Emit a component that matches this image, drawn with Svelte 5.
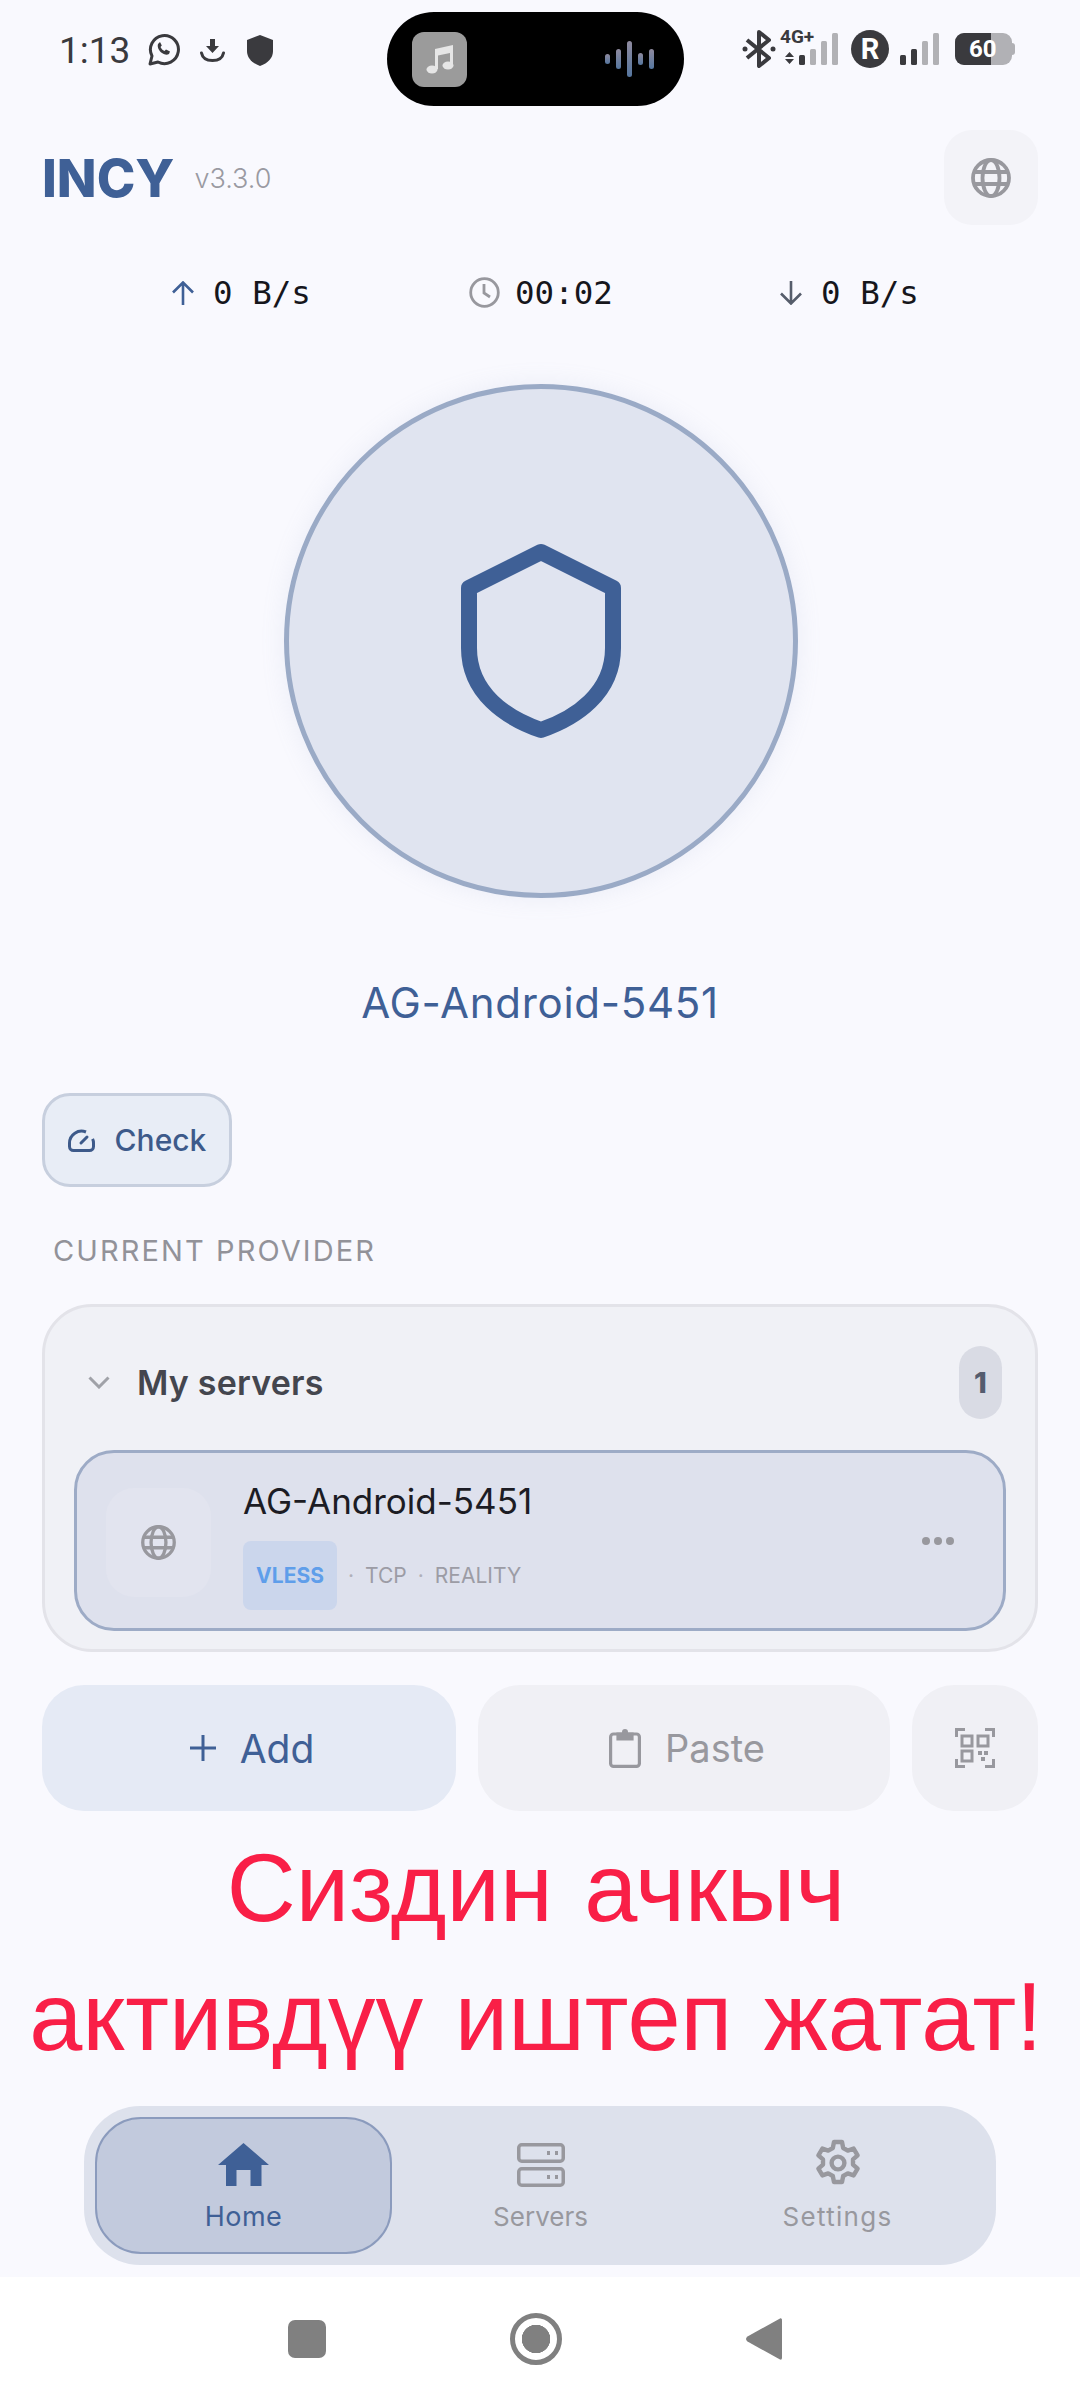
<script>
  const stats = [
    { id: 'up', value: '0 B/s' },
    { id: 'time', value: '00:02' },
    { id: 'down', value: '0 B/s' }
  ];
  const bars = [10, 16, 24, 32];
  const wave = [10, 20, 36, 12, 20];
</script>

{#snippet globe(size)}
  <svg class="globe" width={size} height={size} viewBox="0 0 40 40" fill="none" stroke="currentColor" stroke-width="3.800">
    <circle cx="20" cy="20" r="18" />
    <ellipse cx="20" cy="20" rx="8.500" ry="18" />
    <path d="M3 14h34M3 26h34" />
  </svg>
{/snippet}

{#snippet signal(first)}
  <div class="bars">
    {#each bars as h, i}
      <span class="bar" class:on={i < first} style="height:{h}px"></span>
    {/each}
  </div>
{/snippet}

<div class="page">
  <div class="status">
    <div class="status-left">
      <span class="clock">1:13</span>
      <svg width="33" height="32" viewBox="0 0 33 32" fill="none" stroke="#3a3a3e" stroke-width="3">
        <path d="M3 30l2-8a14 14 0 1 1 6 6z" stroke-linejoin="round" />
        <path d="M11 10c-1 3 1 7 4 9s5 2 7 1l1-2.500-4-2-1.500 1.500c-2-1-3-2-4-4l1.300-1.500-1.800-3.500z" fill="#3a3a3e" stroke="none" />
      </svg>
      <svg class="dl" width="25" height="24" viewBox="0 0 25 24" fill="#3a3a3e">
        <path d="M10 1h5v7h4l-6.500 7L6 8h4z" />
        <path d="M1.500 15c1 5 5 7.500 11 7.500s10-2.500 11-7.500" fill="none" stroke="#3a3a3e" stroke-width="3" stroke-linecap="round" />
      </svg>
      <svg class="sh" width="26" height="31" viewBox="0 0 26 31" fill="#3a3a3e">
        <path d="M13 0l13 5v11c0 7-5 12-13 15C5 28 0 23 0 16V5z" />
      </svg>
    </div>
    <div class="island">
      <div class="music">
        <svg width="28" height="30" viewBox="0 0 28 30" fill="#e6e6e6">
          <path d="M9 5l18-4v20h-3V9L12 11.500V25H9z" />
          <ellipse cx="6" cy="25.500" rx="5.500" ry="4" />
          <ellipse cx="22" cy="21.500" rx="5.500" ry="4" />
        </svg>
      </div>
      <div class="wave">
        {#each wave as h}
          <span style="height:{h}px"></span>
        {/each}
      </div>
    </div>
    <div class="status-right">
      <svg class="bt" width="34" height="38" viewBox="0 0 34 38" fill="none" stroke="#3a3a3e" stroke-width="4">
        <path d="M5 10l22 18-10 8V2l10 8L5 28" stroke-linejoin="round" />
        <circle cx="3" cy="19" r="2.500" fill="#3a3a3e" stroke="none" />
        <circle cx="31" cy="19" r="2.500" fill="#3a3a3e" stroke="none" />
      </svg>
      <div class="net">
        <span class="g4">4G+</span>
        <div class="net-row">
          <svg width="9" height="12" viewBox="0 0 9 12" fill="#3a3a3e"><path d="M4.500 0L9 5H0zM0 7h9l-4.500 5z" /></svg>
          {@render signal(1)}
        </div>
      </div>
      <span class="roam">R</span>
      {@render signal(2)}
      <div class="battery"><span class="fill"></span><span class="pct">60</span></div>
    </div>
  </div>

  <header>
    <div class="brand">
      <span class="logo">INCY</span>
      <span class="version">v3.3.0</span>
    </div>
    <button class="lang">{@render globe(40)}</button>
  </header>

  <div class="stats">
    {#each stats as s}
      <div class="stat {s.id}">
        {#if s.id === 'up'}
          <svg width="24" height="24" viewBox="0 0 24 24" fill="none" stroke="#3f6096" stroke-width="2.600"><path d="M12 24V2M2 11.500L12 1.500l10 10" /></svg>
        {:else if s.id === 'time'}
          <svg width="31" height="31" viewBox="0 0 31 31" fill="none" stroke="#98989e" stroke-width="2.800"><circle cx="15.500" cy="15.500" r="13.800" /><path d="M15 7v9l6 4" /></svg>
        {:else}
          <svg width="24" height="24" viewBox="0 0 24 24" fill="none" stroke="#565d6b" stroke-width="2.600"><path d="M12 0v22M2 12.500l10 10 10-10" /></svg>
        {/if}
        <span>{s.value}</span>
      </div>
    {/each}
  </div>

  <div class="power">
    <button class="orb">
      <svg width="160" height="196" viewBox="0 0 160 196" fill="none" stroke="#3f6096" stroke-width="16" stroke-linejoin="round">
        <path d="M80 9l72 36v60c0 45-37 70-72 82C45 175 8 150 8 105V45z" />
      </svg>
    </button>
    <div class="active-name">AG-Android-5451</div>
  </div>

  <section class="content">
    <button class="check">
      <svg width="27" height="23" viewBox="0 0 27 23" fill="none" stroke="#3d5a8a" stroke-width="3">
        <path d="M18 3A12 12 0 0 0 1.500 14v3.500a4 4 0 0 0 4 4h16a4 4 0 0 0 4-4V14c0-1.500-.3-3-.9-4.200" />
        <path d="M13 14l6-6" stroke-linecap="round" />
      </svg>
      Check
    </button>

    <div class="label">CURRENT PROVIDER</div>

    <div class="card">
      <div class="card-head">
        <svg width="22" height="13" viewBox="0 0 22 13" fill="none" stroke="#a0a2a8" stroke-width="3"><path d="M1.500 1.500l9.500 9.500 9.500-9.500" /></svg>
        <span class="card-title">My servers</span>
        <span class="count">1</span>
      </div>
      <div class="server">
        <div class="tile">{@render globe(35)}</div>
        <div class="server-info">
          <div class="server-name">AG-Android-5451</div>
          <div class="tags">
            <span class="chip">VLESS</span>
            <span class="sep">·</span>
            <span>TCP</span>
            <span class="sep">·</span>
            <span>REALITY</span>
          </div>
        </div>
        <div class="dots"><i></i><i></i><i></i></div>
      </div>
    </div>

    <div class="actions">
      <button class="act add">
        <svg width="26" height="26" viewBox="0 0 26 26" stroke="#3f6096" stroke-width="3"><path d="M13 0v26M0 13h26" /></svg>
        Add
      </button>
      <button class="act paste">
        <svg width="32" height="40" viewBox="0 0 32 40" fill="none" stroke="#98989e" stroke-width="3.200">
          <rect x="1.600" y="6" width="28.800" height="32.400" rx="3" />
          <path d="M9 6h14v5H9z" fill="#98989e" />
          <circle cx="16" cy="4" r="3" fill="#98989e" stroke="none" />
        </svg>
        Paste
      </button>
      <button class="act qr">
        <svg width="40" height="40" viewBox="0 0 40 40" fill="none" stroke="#98989e" stroke-width="3">
          <path d="M1.500 9V1.500H10M30 1.500h8.500V9M1.500 31v7.500H10M30 38.500h8.500V31" />
          <rect x="7" y="8" width="10" height="10" />
          <rect x="23" y="8" width="10" height="10" />
          <rect x="7" y="23" width="10" height="10" />
          <path d="M23 23h4v4h-4zM29 23h4v4h-4zM26 29h4v4h-4z" fill="#98989e" stroke="none" />
        </svg>
      </button>
    </div>
  </section>

  <div class="notice">
    <p>Сиздин ачкыч</p>
    <p>активдүү иштеп жатат!</p>
  </div>

  <nav>
    <div class="tab active">
      <svg width="51" height="43" viewBox="0 0 51 43" fill="#3f6096"><path d="M25.500 0L51 22h-7.500v21h-11V27h-14v16H8V22H0z" /></svg>
      <span>Home</span>
    </div>
    <div class="tab">
      <svg width="48" height="44" viewBox="0 0 48 44" fill="none" stroke="#98989e" stroke-width="3.500">
        <rect x="1.750" y="1.750" width="44.500" height="16.500" rx="3" />
        <rect x="1.750" y="25.750" width="44.500" height="16.500" rx="3" />
        <path d="M30 10h3M38 10h3M30 34h3M38 34h3" stroke-width="4" />
      </svg>
      <span>Servers</span>
    </div>
    <div class="tab wide">
      <svg width="48" height="48" viewBox="0 0 24 24" fill="none" stroke="#98989e" stroke-width="2.200" stroke-linejoin="round">
        <path d="M10 1.500h4l.6 3 2.300 1.300 2.900-1 2 3.400-2.300 2 0 2.600 2.300 2-2 3.400-2.900-1-2.300 1.300-.6 3h-4l-.6-3-2.300-1.300-2.900 1-2-3.400 2.300-2 0-2.600-2.300-2 2-3.400 2.900 1 2.300-1.300z" />
        <circle cx="12" cy="12" r="3.200" />
      </svg>
      <span>Settings</span>
    </div>
  </nav>

  <div class="sysnav">
    <span class="sq"></span>
    <span class="home-btn"></span>
    <svg width="36" height="42" viewBox="0 0 36 42" fill="#808080"><path d="M34 0.500c1.500-.6 2 .5 2 2v37c0 1.500-.5 2.600-2 2L1.500 23.500c-2-1.500-2-3.500 0-5z" /></svg>
  </div>
</div>

<style>
:global(body) {
  margin: 0;
  background: #f9f9fe;
}

.page {
  width: 1080px;
  height: 2400px;
  overflow: hidden;
  display: flex;
  flex-direction: column;
  font-family: Inter, "Noto Sans", sans-serif;
  background: #f9f9fe;
}

button {
  font-family: inherit;
  border: none;
  padding: 0;
}

.status {
  display: grid;
  grid-template-columns: 387px 297px 1fr;
  height: 118px;
  padding-top: 12px;
  box-sizing: border-box;
}

.status-left {
  display: flex;
  align-items: center;
  height: 76px;
  padding-left: 59px;
  gap: 17px;
}

.clock {
  font-family: Roboto, sans-serif;
  font-size: 37px;
  color: #3a3a3e;
  width: 71px;
}

.dl {
  margin-left: 3px;
}

.sh {
  margin-left: 5px;
}

.island {
  height: 94px;
  border-radius: 47px;
  background: #000;
  display: flex;
  align-items: center;
  justify-content: space-between;
  padding: 0 30px 0 25px;
}

.music {
  width: 55px;
  height: 55px;
  border-radius: 12px;
  background: #9b9b9b;
  display: grid;
  place-items: center;
}

.wave {
  display: flex;
  align-items: center;
  gap: 6px;
}

.wave span {
  width: 5px;
  border-radius: 3px;
  background: linear-gradient(#8f8a9e, #55769f);
}

.status-right {
  display: flex;
  align-items: flex-end;
  height: 56px;
  padding-left: 58px;
  margin-top: -3px;
}

.bt {
  margin-bottom: -3px;
}

.net {
  margin-left: 4px;
  width: 58px;
  position: relative;
  height: 35px;
}

.g4 {
  position: absolute;
  left: 0;
  top: -3px;
  font: 700 19px/20px Roboto, sans-serif;
  color: #3a3a3e;
}

.net-row {
  display: flex;
  align-items: flex-end;
  height: 32px;
  margin-top: 3px;
  gap: 5px;
  padding-left: 5px;
}

.net-row svg {
  margin-bottom: 1px;
}

.bars {
  display: flex;
  align-items: flex-end;
  gap: 5px;
}

.bar {
  width: 6px;
  border-radius: 1.500px;
  background: #b1b1b5;
}

.bar.on {
  background: #3a3a3e;
}

.roam {
  width: 38px;
  height: 38px;
  margin: 0 11px -3px 13px;
  border-radius: 50%;
  background: #3a3a3e;
  color: #fff;
  font: 700 29px/38px Roboto, sans-serif;
  text-align: center;
}

.battery {
  position: relative;
  width: 57px;
  height: 32px;
  margin-left: 16px;
  border-radius: 9px;
  background: #b1b1b5;
}

.battery::after {
  content: "";
  position: absolute;
  right: -3px;
  top: 10px;
  width: 3px;
  height: 12px;
  border-radius: 0 3px 3px 0;
  background: #b1b1b5;
}

.fill {
  position: absolute;
  inset: 0 21px 0 0;
  border-radius: 9px 0 0 9px;
  background: #3a3a3e;
}

.pct {
  position: absolute;
  left: 14px;
  top: 3px;
  font: 700 24px/26px Roboto, sans-serif;
  color: #fff;
}

header {
  display: flex;
  align-items: center;
  justify-content: space-between;
  height: 95px;
  padding: 12px 42px 0 42px;
}

.brand {
  display: flex;
  align-items: center;
  gap: 20px;
  padding-top: 2px;
}

.logo {
  font-size: 52px;
  font-weight: 800;
  color: #3f6096;
}

.version {
  font-size: 27px;
  font-weight: 300;
  color: #9a9aa2;
}

.lang {
  width: 94px;
  height: 95px;
  border-radius: 28px;
  background: #f3f3f8;
  color: #98989e;
  display: grid;
  place-items: center;
}

.stats {
  display: grid;
  grid-template-columns: 1fr 1fr 1fr;
  height: 159px;
}

.stat {
  display: flex;
  align-items: flex-start;
  gap: 18px;
  padding-top: 45px;
  font-family: "DejaVu Sans Mono", monospace;
  font-size: 32.500px;
  line-height: 46px;
  color: #16161c;
}

.stat svg {
  margin-top: 11px;
}

.stat.up {
  padding-left: 171px;
}

.stat.time {
  padding-left: 109px;
  gap: 15px;
}

.stat.down {
  padding-left: 59px;
}

.stat.time svg {
  margin-top: 7px;
}

.power {
  display: flex;
  flex-direction: column;
  align-items: center;
  height: 709px;
  box-sizing: border-box;
}

.orb {
  width: 514px;
  height: 514px;
  flex: none;
  margin-left: 2px;
  box-sizing: border-box;
  border-radius: 50%;
  border: 5.500px solid #9aaac6;
  background: radial-gradient(circle, #e0e4f0 0 75%, #dee1ec 100%);
  box-shadow: 0 0 24px rgba(150, 165, 200, 0.14);
  display: grid;
  place-items: center;
}

.active-name {
  margin-top: 80px;
  font-size: 42px;
  line-height: 50px;
  color: #3f6096;
  letter-spacing: 0.700px;
}

.content {
  padding: 0 42px;
  display: flex;
  flex-direction: column;
  align-items: flex-start;
}

.check {
  width: 190px;
  height: 94px;
  box-sizing: border-box;
  border: 3px solid #c7cfde;
  border-radius: 28px;
  background: #e8edf6;
  color: #3d5a8a;
  font-size: 30px;
  font-weight: 550;
  display: flex;
  align-items: center;
  justify-content: center;
  gap: 20px;
}

.label {
  margin: 46px 0 0 11px;
  font-size: 29px;
  line-height: 36px;
  letter-spacing: 2.100px;
  color: #929299;
}

.card {
  margin-top: 35px;
  width: 100%;
  height: 348px;
  box-sizing: border-box;
  border: 3px solid #e3e3e9;
  border-radius: 50px;
  background: #f0f1f6;
  padding: 39px 29px 0;
}

.card-head {
  display: flex;
  align-items: center;
  height: 73px;
  padding: 0 4px 0 14px;
  gap: 27px;
}

.card-title {
  flex: 1;
  font-size: 34px;
  font-weight: 600;
  letter-spacing: 0.200px;
  color: #44464e;
}

.count {
  width: 43px;
  height: 73px;
  border-radius: 22px;
  background: #d9dbe4;
  color: #555c6e;
  font-size: 29px;
  font-weight: 800;
  display: grid;
  place-items: center;
}

.server {
  margin-top: 31px;
  height: 181px;
  box-sizing: border-box;
  border: 3.500px solid #9dabc6;
  border-radius: 40px;
  background: #dee1ed;
  display: flex;
  align-items: center;
  padding: 0 49px 0 29px;
}

.tile {
  width: 105px;
  height: 109px;
  margin-top: 3px;
  border-radius: 28px;
  background: #e2e4ef;
  color: #98989e;
  display: grid;
  place-items: center;
}

.server-info {
  flex: 1;
  align-self: flex-start;
  margin-left: 32px;
  padding-top: 26px;
}

.server-name {
  font-size: 35px;
  line-height: 44px;
  color: #1c1c24;
}

.tags {
  margin-top: 18px;
  display: flex;
  align-items: center;
  gap: 11px;
  font-size: 21px;
  color: #9c9ca5;
}

.chip {
  width: 94px;
  height: 69px;
  border-radius: 8px;
  background: #cbd6ec;
  color: #5f9eea;
  font-weight: 700;
  display: grid;
  place-items: center;
}

.sep {
  opacity: 0.7;
}

.dots {
  display: flex;
  gap: 4px;
}

.dots i {
  width: 8px;
  height: 8px;
  border-radius: 50%;
  background: #98989e;
}

.actions {
  margin-top: 33px;
  width: 100%;
  display: grid;
  grid-template-columns: 414px 412px 1fr;
  gap: 22px;
}

.act {
  height: 126px;
  border-radius: 42px;
  background: #f0f0f5;
  color: #98989e;
  font-size: 38px;
  display: flex;
  align-items: center;
  justify-content: center;
  gap: 24px;
}

.add,
.paste {
  padding-left: 6px;
}

.add {
  background: #e5eaf5;
  color: #3f6096;
  font-size: 39px;
}

.notice {
  flex: 1;
  padding: 13px 8px 0 0;
  text-align: center;
  font-family: "Liberation Sans", Arial, sans-serif;
  font-size: 95.500px;
  line-height: 129px;
  word-spacing: 5px;
  color: #f91f47;
}

.notice p {
  margin: 0;
  white-space: nowrap;
}

nav {
  margin: 0 84px 12px;
  height: 159px;
  box-sizing: border-box;
  padding: 11px 10px 11px 11px;
  border-radius: 56px;
  background: #dde1ec;
  display: grid;
  grid-template-columns: 297px 1fr 1fr;
}

.tab {
  display: flex;
  flex-direction: column;
  align-items: center;
  justify-content: flex-end;
  gap: 14px;
  padding-bottom: 22px;
  color: #98989e;
  font-size: 26px;
}

.tab.wide {
  letter-spacing: 1.300px;
}

.tab.active {
  box-sizing: border-box;
  border: 2px solid #8b9bbd;
  border-radius: 46px;
  padding-bottom: 19px;
  background: #c2cadd;
  color: #3f6096;
  font-size: 27px;
  letter-spacing: 0.500px;
}

.sysnav {
  height: 123px;
  background: #fff;
  display: flex;
  align-items: center;
  padding-left: 288px;
  gap: 184px;
  box-sizing: border-box;
}

.sq {
  width: 38px;
  height: 38px;
  border-radius: 7px;
  background: #808080;
}

.home-btn {
  width: 52px;
  height: 52px;
  box-sizing: border-box;
  border: 5.500px solid #808080;
  border-radius: 50%;
  background: radial-gradient(circle, #808080 0 14px, #fff 14.500px);
}
</style>
